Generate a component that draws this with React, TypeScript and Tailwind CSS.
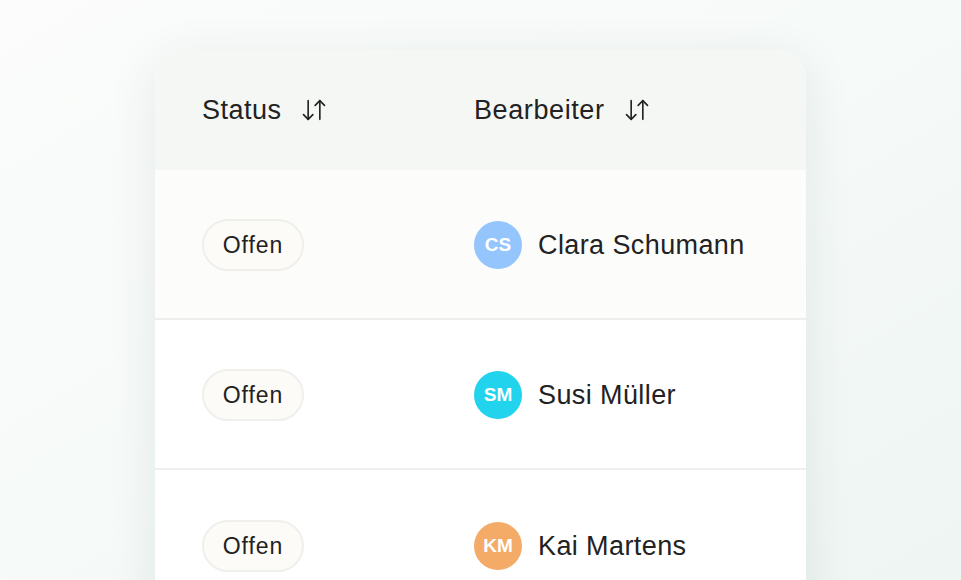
import React from "react";
import { ArrowDownUp } from "lucide-react";

const rows = [
  { initials: "CS", name: "Clara Schumann", color: "bg-[#94c5fc]", bg: "bg-[#fcfdfb]" },
  { initials: "SM", name: "Susi Müller", color: "bg-[#22d3ee]", bg: "bg-white" },
  { initials: "KM", name: "Kai Martens", color: "bg-[#f4ab68]", bg: "bg-white" },
];

export default function App() {
  return (
    <div
      className="h-[580px] w-[961px] overflow-hidden bg-gradient-to-br from-[#fbfcfb] via-[#f6faf8] to-[#eef5f2] pt-[50px] pl-[155px] text-[#222222]"
      style={{ fontFamily: '"Liberation Sans", Arial, sans-serif' }}
    >
      <div className="w-[651px] rounded-t-[28px] bg-white shadow-[0_10px_50px_rgba(20,60,50,0.09)] overflow-hidden">
        <div className="flex h-[120px] items-center bg-[#f5f7f5] pl-[47px]">
          <div className="flex w-[272px] items-center gap-[18px]">
            <span className="text-[27px] tracking-[0.5px]">Status</span>
            <ArrowDownUp size={28} strokeWidth={1.4} className="text-[#222]" />
          </div>
          <div className="flex items-center gap-[18px]">
            <span className="text-[27px] tracking-[0.6px]">Bearbeiter</span>
            <ArrowDownUp size={28} strokeWidth={1.4} className="text-[#222]" />
          </div>
        </div>
        {rows.map((r, i) => (
          <div
            key={r.initials}
            className={`flex h-[150px] items-center pl-[47px] pt-[2px] ${r.bg} ${i < rows.length - 1 ? "border-b-2 border-[#eeeeee]" : ""}`}
          >
            <div className="w-[272px]">
              <span className="inline-flex h-[52px] w-[102px] items-center justify-center rounded-full border-2 border-[#efefec] bg-[#fdfbf7] text-[23px] tracking-[0.9px]">
                Offen
              </span>
            </div>
            <div className="flex items-center gap-[16px]">
              <div
                className={`flex h-[48px] w-[48px] items-center justify-center rounded-full ${r.color} text-[19px] font-bold text-white`}
              >
                {r.initials}
              </div>
              <span className="text-[27px] tracking-[0.4px]">{r.name}</span>
            </div>
          </div>
        ))}
      </div>
    </div>
  );
}
